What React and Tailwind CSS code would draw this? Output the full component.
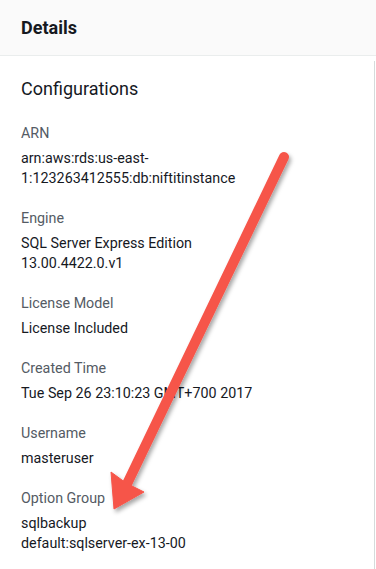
const fields = [
  { label: 'ARN', value: ['arn:aws:rds:us-east-', '1:123263412555:db:niftitinstance'] },
  { label: 'Engine', value: ['SQL Server Express Edition', '13.00.4422.0.v1'] },
  { label: 'License Model', value: ['License Included'] },
  { label: 'Created Time', value: ['Tue Sep 26 23:10:23 GMT+700 2017'] },
  { label: 'Username', value: ['masteruser'] },
  { label: 'Option Group', value: ['sqlbackup', 'default:sqlserver-ex-13-00'] },
];

const Arrow = () => (
  <svg
    className="absolute left-0 top-0 pointer-events-none"
    width="376"
    height="569"
    viewBox="0 0 376 569"
  >
    <defs>
      <filter id="shadow" x="-20%" y="-20%" width="140%" height="140%">
        <feDropShadow dx="2" dy="3" stdDeviation="2" floodColor="#000" floodOpacity="0.35" />
      </filter>
    </defs>
    <g filter="url(#shadow)" fill="#f6554a" stroke="#f6554a">
      <line x1="284" y1="157" x2="127" y2="484" strokeWidth="10" strokeLinecap="round" />
      <polygon points="114,509 111,472 126,483 144,492" strokeWidth="1" strokeLinejoin="round" />
    </g>
  </svg>
);

export default function App() {
  return (
    <div
      className="relative w-[376px] h-[569px] overflow-hidden bg-white text-[#16191f]"
      style={{ fontFamily: 'Roboto, "Open Sans", sans-serif' }}
    >
      {/* Header */}
      <div className="h-[56px] bg-[#fafafa] border-b border-[#eaeded] flex items-center px-[21px]">
        <h2 className="text-[18px] font-bold leading-6">Details</h2>
      </div>

      {/* Body */}
      <div className="pt-[5px]">
        <div className="w-[375px] h-[520px] border-r border-[#d5dbdb] pt-[16px] px-[21px]">
          <h3 className="text-[18px] leading-6 mb-[22px]">Configurations</h3>
          <div className="flex flex-col gap-5">
            {fields.map((f) => (
              <div key={f.label}>
                <div className="text-[14.3px] leading-5 text-[#545b64] mb-[5px]">{f.label}</div>
                {f.value.map((v) => (
                  <div key={v} className="text-[14.3px] leading-5">
                    {v}
                  </div>
                ))}
              </div>
            ))}
          </div>
        </div>
      </div>

      <Arrow />
    </div>
  );
}
